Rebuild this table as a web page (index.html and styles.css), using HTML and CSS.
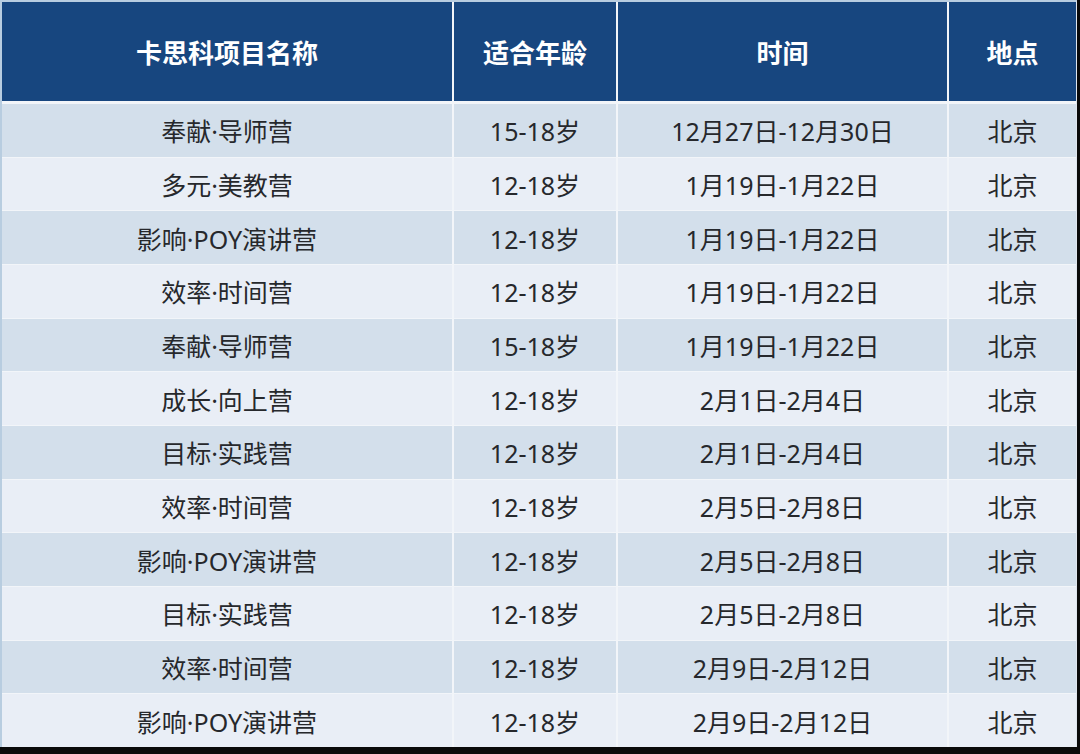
FILE: index.html
```html
<!DOCTYPE html>
<html lang="zh-CN">
<head>
<meta charset="utf-8">
<title>卡思科项目</title>
<link rel="stylesheet" href="styles.css">
</head>
<body>
<div class="frame">
  <div class="table">
    <div class="th">卡思科项目名称</div>
    <div class="th">适合年龄</div>
    <div class="th">时间</div>
    <div class="th">地点</div>

    <div class="td odd">奉献·导师营</div><div class="td odd">15-18岁</div><div class="td odd">12月27日-12月30日</div><div class="td odd">北京</div>
    <div class="td even">多元·美教营</div><div class="td even">12-18岁</div><div class="td even">1月19日-1月22日</div><div class="td even">北京</div>
    <div class="td odd">影响·POY演讲营</div><div class="td odd">12-18岁</div><div class="td odd">1月19日-1月22日</div><div class="td odd">北京</div>
    <div class="td even">效率·时间营</div><div class="td even">12-18岁</div><div class="td even">1月19日-1月22日</div><div class="td even">北京</div>
    <div class="td odd">奉献·导师营</div><div class="td odd">15-18岁</div><div class="td odd">1月19日-1月22日</div><div class="td odd">北京</div>
    <div class="td even">成长·向上营</div><div class="td even">12-18岁</div><div class="td even">2月1日-2月4日</div><div class="td even">北京</div>
    <div class="td odd">目标·实践营</div><div class="td odd">12-18岁</div><div class="td odd">2月1日-2月4日</div><div class="td odd">北京</div>
    <div class="td even">效率·时间营</div><div class="td even">12-18岁</div><div class="td even">2月5日-2月8日</div><div class="td even">北京</div>
    <div class="td odd">影响·POY演讲营</div><div class="td odd">12-18岁</div><div class="td odd">2月5日-2月8日</div><div class="td odd">北京</div>
    <div class="td even">目标·实践营</div><div class="td even">12-18岁</div><div class="td even">2月5日-2月8日</div><div class="td even">北京</div>
    <div class="td odd">效率·时间营</div><div class="td odd">12-18岁</div><div class="td odd">2月9日-2月12日</div><div class="td odd">北京</div>
    <div class="td even">影响·POY演讲营</div><div class="td even">12-18岁</div><div class="td even">2月9日-2月12日</div><div class="td even">北京</div>
  </div>
</div>
</body>
</html>
```

FILE: styles.css
```css
html, body {
  margin: 0;
  padding: 0;
  background: #000;
}

.frame {
  width: 1080px;
  height: 754px;
  background: #0a0a0a;
  display: flex;
  align-items: flex-start;
}

.table {
  box-sizing: border-box;
  width: 1077px;
  height: 747px;
  border-top: 2px solid #b8cde0;
  border-left: 2px solid #b8cde0;
  border-right: 1px solid #dfe6ee;
  background: #f2f5f9;
  display: grid;
  grid-template-columns: 450px 162px 329px 127px;
  grid-template-rows: 101px repeat(12, 1fr);
  column-gap: 2px;
  row-gap: 1px;
  font-family: "Noto Sans", "Noto Sans CJK SC", sans-serif;
}

.th {
  background: #17467f;
  color: #ffffff;
  font-weight: 700;
  font-size: 26px;
  display: flex;
  align-items: center;
  justify-content: center;
  margin-bottom: 2px;
}

.td {
  display: flex;
  align-items: center;
  justify-content: center;
  font-size: 25px;
  color: #26282c;
}

.odd {
  background: #d3dfeb;
}

.even {
  background: #e9eef6;
}
```
